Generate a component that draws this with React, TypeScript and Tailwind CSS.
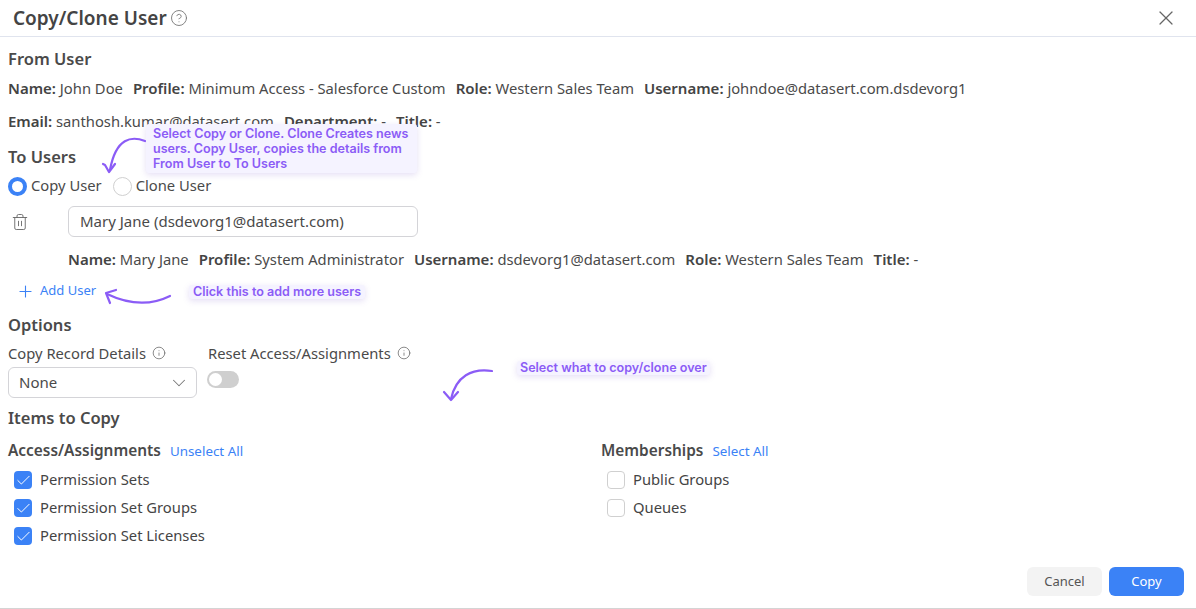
import { ChevronDown, Check, Info, Plus, Trash2, X, CircleHelp } from "lucide-react";

function Field({ k, v }: { k: string; v: string }) {
  return (
    <span className="whitespace-nowrap">
      <span className="text-[15px] font-semibold text-[#444]">{k}:</span> {v}
    </span>
  );
}

function Box({ label, on }: { label: string; on?: boolean }) {
  return (
    <div className="flex h-[28px] items-center pl-[6px] text-[#444]">
      {on ? (
        <span className="flex h-[18px] w-[18px] items-center justify-center rounded-[4px] bg-[#3b82f6]">
          <Check size={17} strokeWidth={1.4} className="text-white" />
        </span>
      ) : (
        <span className="h-[18px] w-[18px] rounded-[4px] border border-[#d0d0d0] bg-white" />
      )}
      <span className="mb-[2px] ml-[8px]">{label}</span>
    </div>
  );
}

function Note({ children, className }: { children: React.ReactNode; className: string }) {
  return (
    <div
      className={"absolute rounded-[3px] bg-[#f5f3ff] text-[12.55px] font-semibold text-[#8b5cf6] shadow-[0_2px_6px_rgba(110,80,200,0.18)] " + className}
      style={{ fontFamily: "Inter, sans-serif" }}
    >
      {children}
    </div>
  );
}

export default function App() {
  return (
    <div
      className="relative h-[609px] w-[1196px] overflow-hidden border-b border-[#d4d4d4] bg-white text-[14.75px] text-[#4a4a4a]"
      style={{ fontFamily: '"Noto Sans", sans-serif' }}
    >
      <header className="flex h-[37px] items-center justify-between border-b border-[#e0e4ee] pl-[13px] pr-[18px]">
        <div className="flex items-center gap-[3px]">
          <h1 className="text-[19px] font-semibold text-[#444]">Copy/Clone User</h1>
          <CircleHelp size={18} strokeWidth={1.2} className="text-[#777]" />
        </div>
        <X size={24} strokeWidth={1.2} className="text-[#666]" />
      </header>

      <main className="px-[8px]">
        <h2 className="mt-[11px] h-[22px] text-[16.5px] leading-[22px] font-semibold">From User</h2>
        <div className="mt-[8px] flex h-[20px] items-center gap-[10px] leading-[20px]">
          <Field k="Name" v="John Doe" />
          <Field k="Profile" v="Minimum Access - Salesforce Custom" />
          <Field k="Role" v="Western Sales Team" />
          <Field k="Username" v="johndoe@datasert.com.dsdevorg1" />
        </div>
        <div className="mt-[13px] flex h-[20px] items-center gap-[10px] leading-[20px]">
          <Field k="Email" v="santhosh.kumar@datasert.com" />
          <Field k="Department" v="-" />
          <Field k="Title" v="-" />
        </div>

        <h2 className="mt-[15px] h-[22px] text-[16.5px] leading-[22px] font-semibold">To Users</h2>
        <div className="mt-[8px] flex h-[20px] items-center">
          <span className="h-[19px] w-[19px] rounded-full border-[4px] border-[#3b82f6] bg-white" />
          <span className="mb-[2px] ml-[4px]">Copy User</span>
          <span className="ml-[11px] h-[19px] w-[19px] rounded-full border border-[#d0d0d0] bg-white" />
          <span className="mb-[2px] ml-[4px]">Clone User</span>
        </div>

        <div className="mt-[10px] flex h-[31px] items-center">
          <Trash2 size={18} strokeWidth={1.2} className="ml-[3px] text-[#666]" />
          <div className="ml-[39px] flex h-[31px] w-[350px] items-center rounded-[6px] border border-[#d4d4d8] pl-[11px] text-[15px]">
            Mary Jane (dsdevorg1@datasert.com)
          </div>
        </div>

        <div className="mt-[12px] ml-[60px] flex h-[20px] items-center gap-[10px] leading-[20px]">
          <Field k="Name" v="Mary Jane" />
          <Field k="Profile" v="System Administrator" />
          <Field k="Username" v="dsdevorg1@datasert.com" />
          <Field k="Role" v="Western Sales Team" />
          <Field k="Title" v="-" />
        </div>

        <div className="mt-[12px] ml-[8px] flex h-[20px] items-center text-[13px] text-[#3b82f6]">
          <Plus size={19} strokeWidth={1.4} />
          <span className="ml-[5px]">Add User</span>
        </div>

        <h2 className="mt-[13px] h-[22px] text-[16.5px] leading-[22px] font-semibold">Options</h2>

        <div className="mt-[7px] flex gap-[11px]">
          <div className="w-[189px]">
            <div className="flex h-[20px] items-center gap-[6px]">
              Copy Record Details <Info size={14} strokeWidth={1.3} className="text-[#666]" />
            </div>
            <div className="mt-[4px] flex h-[31px] items-center justify-between rounded-[6px] border border-[#d4d4d8] pr-[6px] pl-[10px] text-[15px]">
              None
              <ChevronDown size={22} strokeWidth={1.1} className="text-[#777]" />
            </div>
          </div>
          <div>
            <div className="flex h-[20px] items-center gap-[6px]">
              Reset Access/Assignments <Info size={14} strokeWidth={1.3} className="text-[#666]" />
            </div>
            <div className="mt-[8px] -ml-[1px] h-[17px] w-[32px] rounded-full bg-[#cfcfcf] p-[2px]">
              <div className="h-[13px] w-[13px] rounded-full bg-white" />
            </div>
          </div>
        </div>

        <h2 className="mt-[9px] h-[22px] text-[16.5px] leading-[22px] font-semibold">Items to Copy</h2>

        <div className="mt-[10px] grid grid-cols-[593px_1fr]">
          <div>
            <div className="flex h-[20px] items-baseline gap-[9px]">
              <span className="text-[15.4px] font-semibold">Access/Assignments</span>
              <span className="text-[13.4px] text-[#3b82f6]">Unselect All</span>
            </div>
            <div className="mt-[7px]">
              <Box label="Permission Sets" on />
              <Box label="Permission Set Groups" on />
              <Box label="Permission Set Licenses" on />
            </div>
          </div>
          <div>
            <div className="flex h-[20px] items-baseline gap-[9px]">
              <span className="text-[15.4px] font-semibold">Memberships</span>
              <span className="text-[13.4px] text-[#3b82f6]">Select All</span>
            </div>
            <div className="mt-[7px]">
              <Box label="Public Groups" />
              <Box label="Queues" />
            </div>
          </div>
        </div>

        <div className="mt-[17px] flex justify-end gap-[7px] pr-[4px] text-[13px]">
          <button className="h-[29px] w-[75px] rounded-[6px] bg-[#f3f3f3] text-[#555]">Cancel</button>
          <button className="h-[29px] w-[75px] rounded-[6px] bg-[#3b82f6] text-white">Copy</button>
        </div>
      </main>

      <Note className="top-[124px] left-[146px] w-[271px] px-[7px] py-[2px] leading-[15px]">
        Select Copy or Clone. Clone Creates news users. Copy User, copies the details from From User to To Users
      </Note>
      <Note className="top-[285px] left-[189px] px-[4px] leading-[14px]">Click this to add more users</Note>
      <Note className="top-[361px] left-[517px] px-[3px] leading-[14px]">Select what to copy/clone over</Note>

      <svg className="absolute top-[134px] left-[94px]" width="54" height="42" viewBox="0 0 54 42" fill="none" stroke="#8b5cf6" strokeWidth="2.2" strokeLinecap="round" strokeLinejoin="round">
        <path d="M51 7C38 2 22 3 16 36" />
        <path d="M9 30L11 31L15 38L21 30" />
      </svg>
      <svg className="absolute top-[286px] left-[100px]" width="76" height="24" viewBox="0 0 76 24" fill="none" stroke="#8b5cf6" strokeWidth="2.2" strokeLinecap="round" strokeLinejoin="round">
        <path d="M70 10C52 19 30 19 7 8" />
        <path d="M16 4L6 7L10 17" />
      </svg>
      <svg className="absolute top-[364px] left-[438px]" width="60" height="40" viewBox="0 0 60 40" fill="none" stroke="#8b5cf6" strokeWidth="2.2" strokeLinecap="round" strokeLinejoin="round">
        <path d="M54 7C34 4 18 12 13 35" />
        <path d="M6 28L13 36L20 28" />
      </svg>
    </div>
  );
}
